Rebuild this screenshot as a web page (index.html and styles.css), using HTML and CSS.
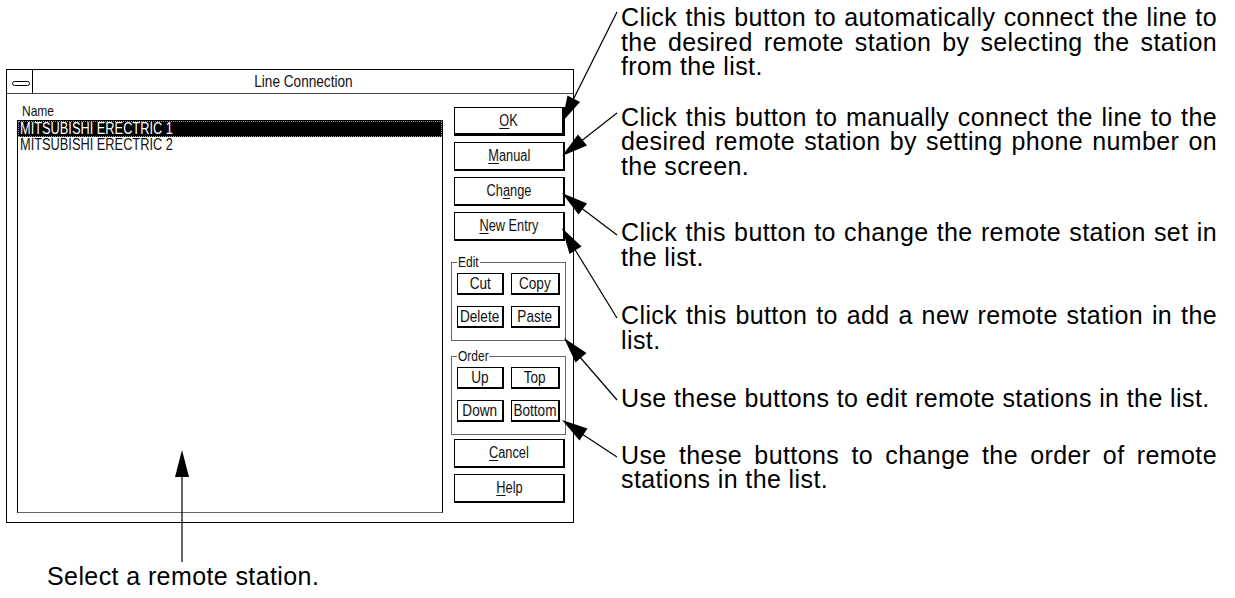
FILE: index.html
```html
<!DOCTYPE html>
<html>
<head>
<meta charset="utf-8">
<link rel="stylesheet" href="styles.css">
</head>
<body>
<div class="page">
  <div class="left">
    <div class="dialog">
      <div class="titlebar">
        <div class="sysmenu">
          <svg width="18" height="6" viewBox="0 0 18 6"><rect x="0.5" y="0.5" width="17" height="4" rx="2" fill="#fff" stroke="#000"/></svg>
        </div>
        <div class="title"><span class="nar">Line Connection</span></div>
      </div>
      <div class="dlg-body">
        <div class="list-col">
          <div class="list-label"><span class="nar left">Name</span></div>
          <div class="listbox">
            <div class="row selected"><span class="nar left">MITSUBISHI ERECTRIC 1</span></div>
            <div class="row"><span class="nar left">MITSUBISHI ERECTRIC 2</span></div>
          </div>
        </div>
        <div class="btn-col">
          <button class="btn big default"><span class="nar"><u>O</u>K</span></button>
          <button class="btn big"><span class="nar"><u>M</u>anual</span></button>
          <button class="btn big"><span class="nar">Ch<u>a</u>nge</span></button>
          <button class="btn big"><span class="nar"><u>N</u>ew Entry</span></button>
          <fieldset class="group edit">
            <legend><span class="nar left lg-edit">Edit</span></legend>
            <div class="grid2">
              <button class="btn small"><span class="nar">Cut</span></button>
              <button class="btn small"><span class="nar">Copy</span></button>
              <button class="btn small"><span class="nar">Delete</span></button>
              <button class="btn small"><span class="nar">Paste</span></button>
            </div>
          </fieldset>
          <fieldset class="group order">
            <legend><span class="nar left lg-order">Order</span></legend>
            <div class="grid2">
              <button class="btn small"><span class="nar">Up</span></button>
              <button class="btn small"><span class="nar">Top</span></button>
              <button class="btn small"><span class="nar">Down</span></button>
              <button class="btn small"><span class="nar">Bottom</span></button>
            </div>
          </fieldset>
          <button class="btn big cancel"><span class="nar"><u>C</u>ancel</span></button>
          <button class="btn big"><span class="nar"><u>H</u>elp</span></button>
        </div>
      </div>
    </div>
    <p class="caption">Select a remote station.</p>
  </div>
  <div class="notes">
    <p class="note n1">Click this button to automatically connect the line to the desired remote station by selecting the station from the list.</p>
    <p class="note n2">Click this button to manually connect the line to the desired remote station by setting phone number on the screen.</p>
    <p class="note n3">Click this button to change the remote station set in the list.</p>
    <p class="note n4">Click this button to add a new remote station in the list.</p>
    <p class="note n5">Use these buttons to edit remote stations in the list.</p>
    <p class="note n6">Use these buttons to change the order of remote stations in the list.</p>
  </div>
  <svg class="arrows" width="1235" height="598" viewBox="0 0 1235 598">
    <g stroke="#000" stroke-width="1.2" fill="none">
      <line x1="617" y1="12" x2="570" y2="106"/>
      <line x1="617" y1="113" x2="580" y2="142"/>
      <line x1="617" y1="235" x2="580" y2="207"/>
      <line x1="617" y1="318" x2="574" y2="248"/>
      <line x1="617" y1="400" x2="579" y2="356"/>
      <line x1="617" y1="457" x2="582" y2="434"/>
      <line x1="182" y1="562" x2="182" y2="472"/>
    </g>
    <g fill="#000">
      <polygon points="562,122 580,102 567.5,95.5"/>
      <polygon points="562,156 587,145.5 578,134.5"/>
      <polygon points="562,193 587,203.5 578.5,214.5"/>
      <polygon points="562,228 581.5,246.5 569.5,254"/>
      <polygon points="564,338 586.5,353 575.5,362.5"/>
      <polygon points="562,420 587.5,428.5 579.5,440.5"/>
      <polygon points="182,450 175,477 189,477"/>
    </g>
  </svg>
</div>
</body>
</html>
```

FILE: styles.css
```css
* { box-sizing: border-box; }
html, body { margin: 0; padding: 0; background: #fff; }
.page {
  position: relative;
  width: 1235px;
  height: 598px;
  display: grid;
  grid-template-columns: 621px 596px;
  overflow: hidden;
}
.left { display: flex; flex-direction: column; }
.dialog {
  margin: 69px 0 0 6px;
  width: 568px;
  height: 454px;
  border: 1px solid #000;
  display: flex;
  flex-direction: column;
  font-family: "Liberation Sans", Arial, sans-serif;
  color: #000;
}
.nar {
  display: inline-block;
  white-space: nowrap;
  transform: scaleX(0.8);
  transform-origin: 50% 50%;
}
.nar.left { transform-origin: 0 50%; }
.lg-edit { margin-right: -5px; }
.lg-order { margin-right: -8px; }
.titlebar {
  height: 24px;
  border-bottom: 1px solid #444;
  display: flex;
}
.sysmenu {
  width: 26px;
  border-right: 1px solid #000;
  display: flex;
  align-items: center;
  justify-content: center;
  padding: 4px 0 0 3px;
}
.sysmenu svg { display: block; }
.title {
  flex: 1;
  text-align: center;
  font-size: 17px;
  line-height: 23px;
  color: #111;
}
.dlg-body {
  flex: 1;
  display: flex;
  padding: 8px 7px 9px 10px;
}
.list-col {
  width: 426px;
  display: flex;
  flex-direction: column;
}
.list-label {
  font-size: 15px;
  line-height: 18px;
  height: 18px;
  padding-left: 5px;
  color: #111;
}
.listbox {
  flex: 1;
  border: 1px solid #000;
  border-bottom-color: #666;
}
.row {
  font-size: 16px;
  line-height: 16px;
  height: 16px;
  padding-left: 2px;
  white-space: nowrap;
  color: #111;
}
.row.selected {
  background: #000;
  color: #fff;
  outline: 1px dotted #999;
  outline-offset: -1px;
}
.btn-col {
  width: 115px;
  margin-left: 8px;
  padding-top: 5px;
  display: flex;
  flex-direction: column;
}
.btn {
  font-family: "Liberation Sans", Arial, sans-serif;
  background: #fff;
  color: #111;
  border: 1px solid #000;
  border-right-width: 2px;
  border-bottom-width: 2px;
  padding: 0;
  margin: 0;
  font-size: 16px;
  line-height: 1;
  display: flex;
  align-items: center;
  justify-content: center;
}
.btn u { text-decoration-thickness: 1px; text-underline-offset: 2px; }
.btn.big {
  height: 29px;
  margin: 0 1px 6px 3px;
}
.btn.default {
  border-right-width: 3px;
  border-bottom-width: 3px;
}
.btn.cancel { margin-top: 4px; }
.group {
  margin: 8px 0 0 0;
  padding: 4px 4px 12px 5px;
  border: 1px solid #666;
  min-width: 0;
}
.group legend {
  font-size: 15px;
  line-height: 14px;
  padding: 0 1px;
  color: #111;
}
.grid2 {
  display: grid;
  grid-template-columns: 47px 49px;
  grid-auto-rows: 22px;
  column-gap: 7px;
  row-gap: 11px;
}
.btn.small { height: 22px; font-size: 17px; }
.caption {
  margin: 41px 0 0 47px;
  font-family: "Liberation Sans", Arial, sans-serif;
  font-size: 25px;
  letter-spacing: 0.4px;
  line-height: 25px;
  color: #000;
}
.notes {
  font-family: "Liberation Sans", Arial, sans-serif;
  font-size: 25px;
  letter-spacing: 0.4px;
  line-height: 24.5px;
  color: #000;
}
.note { margin: 0; text-align: justify; }
.n1 { margin-top: 5px; }
.n2 { margin-top: 26px; }
.n3 { margin-top: 42px; }
.n4 { margin-top: 34px; }
.n5 { margin-top: 34px; }
.n6 { margin-top: 32px; }
.arrows {
  position: absolute;
  left: 0;
  top: 0;
  pointer-events: none;
}
```
